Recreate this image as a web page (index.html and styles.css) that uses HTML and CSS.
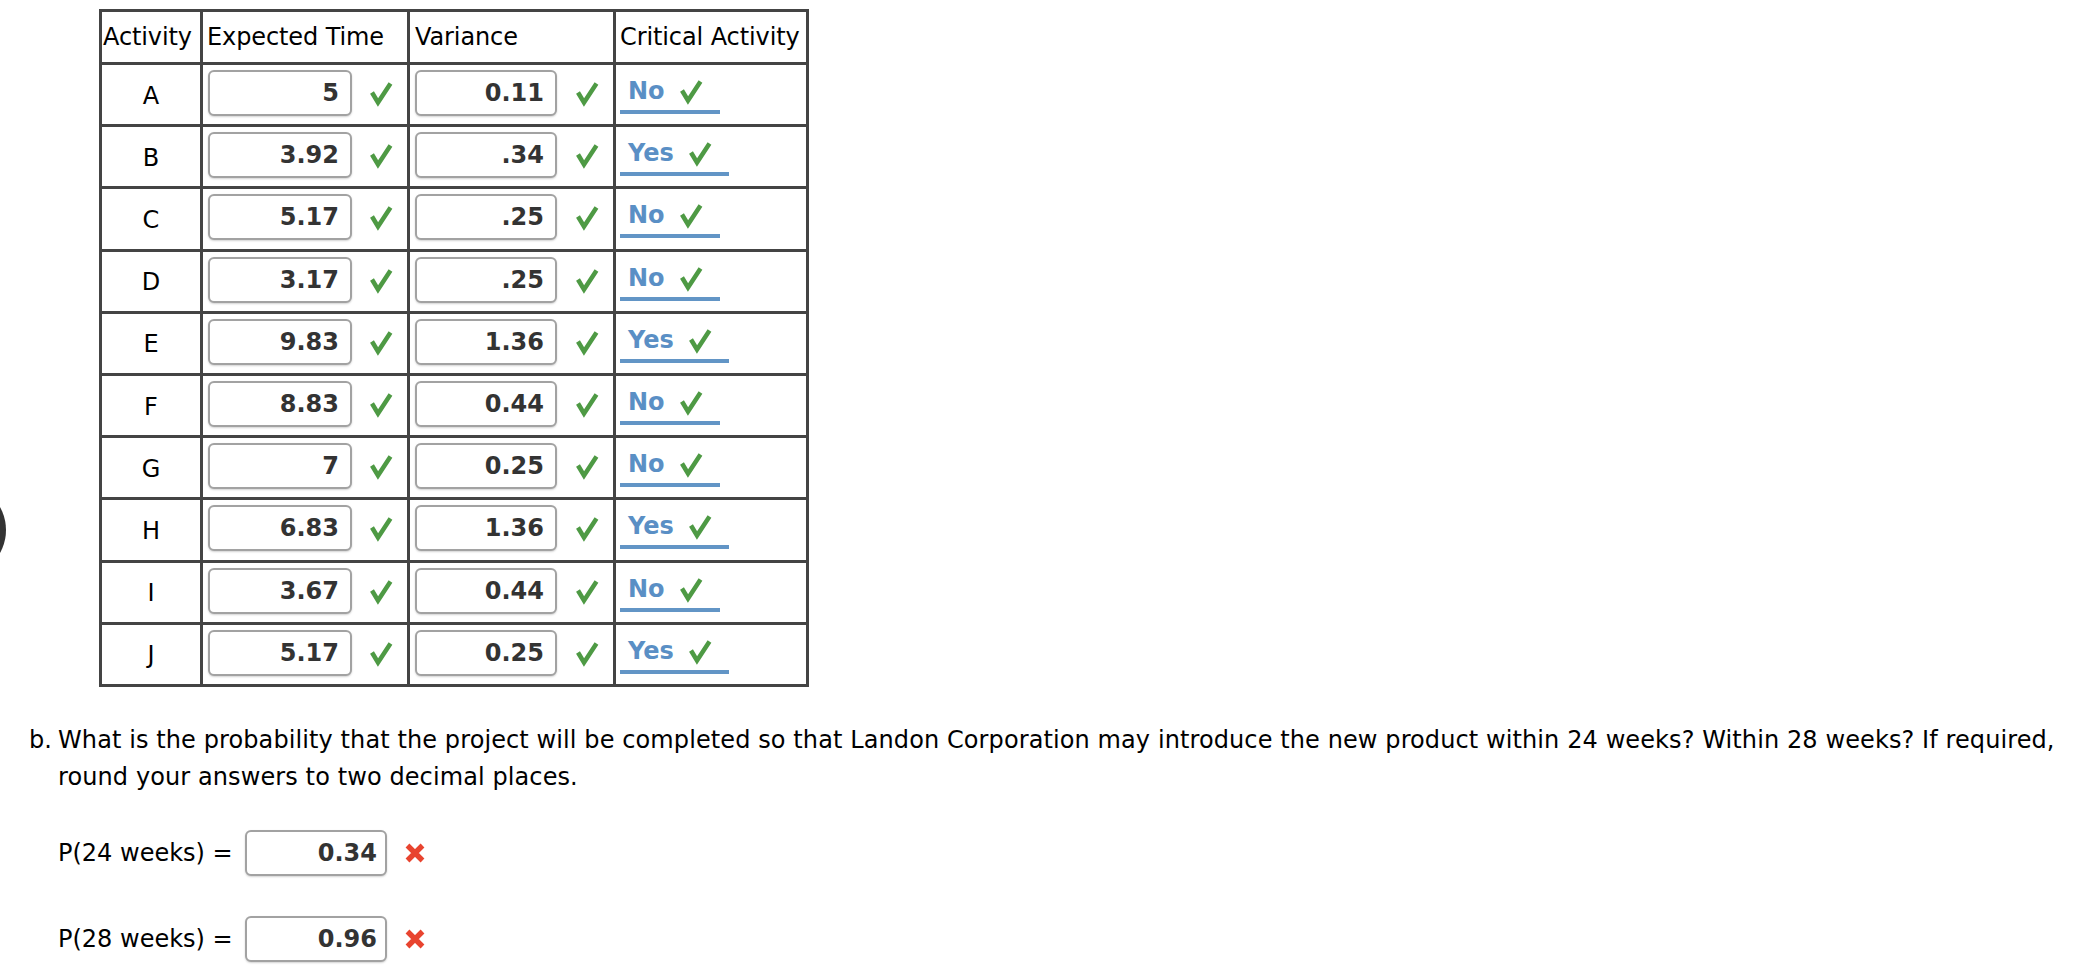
FILE: index.html
```html
<!DOCTYPE html>
<html>
<head>
<meta charset="utf-8">
<link rel="stylesheet" href="styles.css">
</head>
<body>
<div class="side-btn"></div>
<div class="page">
  <table class="grid">
    <colgroup>
      <col class="c1"><col class="c2"><col class="c3"><col class="c4">
    </colgroup>
    <thead>
      <tr class="head">
        <th>Activity</th><th>Expected Time</th><th>Variance</th><th>Critical Activity</th>
      </tr>
    </thead>
    <tbody id="rows"></tbody>
  </table>

  <div class="question">
    <span class="qlabel">b.</span>
    <span class="qtext">What is the probability that the project will be completed so that Landon Corporation may introduce the new product within 24 weeks? Within 28 weeks? If required, round your answers to two decimal places.</span>
  </div>

  <div class="answers">
    <div class="arow">
      <span class="alabel">P(24 weeks) =</span>
      <span class="box abox">0.34</span>
      <svg class="xmark" viewBox="0 0 20 20"><path d="M2.5 2.5 L17.5 17.5 M17.5 2.5 L2.5 17.5"/></svg>
    </div>
    <div class="arow">
      <span class="alabel">P(28 weeks) =</span>
      <span class="box abox">0.96</span>
      <svg class="xmark" viewBox="0 0 20 20"><path d="M2.5 2.5 L17.5 17.5 M17.5 2.5 L2.5 17.5"/></svg>
    </div>
  </div>
</div>
<script src="script.js"></script>
</body>
</html>
```

FILE: script.js
```js
var data = [
  ["A", "5", "0.11", "No"],
  ["B", "3.92", ".34", "Yes"],
  ["C", "5.17", ".25", "No"],
  ["D", "3.17", ".25", "No"],
  ["E", "9.83", "1.36", "Yes"],
  ["F", "8.83", "0.44", "No"],
  ["G", "7", "0.25", "No"],
  ["H", "6.83", "1.36", "Yes"],
  ["I", "3.67", "0.44", "No"],
  ["J", "5.17", "0.25", "Yes"]
];
var check = '<svg class="check" viewBox="0 0 22 24"><path d="M2 11.5 L8 21.5 L20.5 2.5"/></svg>';
var html = "";
data.forEach(function (r) {
  html += '<tr class="row">' +
    '<td class="act">' + r[0] + '</td>' +
    '<td class="val"><div class="cell"><span class="box ibox">' + r[1] + '</span>' + check + '</div></td>' +
    '<td class="val"><div class="cell"><span class="box ibox">' + r[2] + '</span>' + check + '</div></td>' +
    '<td class="crit"><span class="sel"><span class="seltext">' + r[3] + '</span>' + check + '</span></td>' +
    '</tr>';
});
document.getElementById("rows").innerHTML = html;
```

FILE: styles.css
```css
html, body {
  margin: 0;
  padding: 0;
  background: #fff;
}
body {
  font-family: "DejaVu Sans", Verdana, sans-serif;
  font-size: 24px;
  color: #000;
  position: relative;
  overflow: hidden;
  height: 972px;
}
.side-btn {
  position: absolute;
  left: -88px;
  top: 483px;
  width: 94px;
  height: 94px;
  border-radius: 50%;
  background: #333;
}
.page {
  padding-top: 9px;
}
.grid {
  margin-left: 99px;
  border-collapse: separate;
  border-spacing: 0;
  table-layout: fixed;
  width: 710px;
  border-top: 3px solid #444;
  border-left: 3px solid #444;
  box-sizing: border-box;
}
.c1 { width: 101px; }
.c2 { width: 207px; }
.c3 { width: 206px; }
.c4 { width: 193px; }
.grid th, .grid td {
  box-sizing: border-box;
  border-right: 3px solid #444;
  border-bottom: 3px solid #444;
  padding: 0;
}
.grid th {
  height: 53px;
  font-weight: normal;
  text-align: left;
  vertical-align: middle;
  white-space: nowrap;
  padding-left: 1px;
  letter-spacing: -0.1px;
}
.grid th:nth-child(2) { padding-left: 4px; }
.grid th:nth-child(3) { padding-left: 5px; }
.grid th:nth-child(4) { padding-left: 4px; }
.grid td {
  height: 62.2px;
}
.grid td.act {
  text-align: center;
  vertical-align: middle;
  padding-top: 2px;
}
.grid td.val,
.grid td.crit {
  vertical-align: top;
  padding-top: 5px;
}
.cell {
  display: flex;
  align-items: center;
  padding-left: 5px;
  gap: 18px;
}
.val:nth-child(3) .cell { gap: 19px; }
.box {
  box-sizing: border-box;
  display: inline-flex;
  align-items: center;
  justify-content: flex-end;
  height: 46px;
  border: 2px solid #a2a2a2;
  border-radius: 6px;
  box-shadow: 0 1px 2px rgba(0, 0, 0, 0.18);
  background: #fff;
  font-weight: bold;
  color: #333;
  padding-right: 11px;
}
.ibox { width: 144px; }
.val:nth-child(3) .ibox { width: 142px; }
.check {
  width: 22px;
  height: 24px;
  flex: none;
  overflow: visible;
}
.check path {
  fill: none;
  stroke: #4e9a44;
  stroke-width: 4.5;
  stroke-linejoin: miter;
  stroke-linecap: butt;
}
.grid td.crit {
  padding-left: 4px;
}
.sel {
  box-sizing: border-box;
  display: inline-flex;
  align-items: center;
  height: 44px;
  padding: 2px 18px 0 8px;
  gap: 15px;
  border-bottom: 4px solid #6295c6;
}
.seltext {
  font-weight: bold;
  color: #5a8fc5;
}
.question {
  display: flex;
  margin-top: 35px;
  padding-left: 29px;
  padding-right: 20px;
  line-height: 37px;
  letter-spacing: 0.1px;
}
.qlabel {
  flex: none;
  width: 29px;
}
.answers {
  margin-top: 34px;
  padding-left: 58px;
  display: flex;
  flex-direction: column;
  gap: 40px;
}
.arow {
  display: flex;
  align-items: center;
  height: 46px;
}
.alabel {
  width: 187px;
}
.abox {
  width: 142px;
  padding-right: 8px;
}
.xmark {
  width: 20px;
  height: 20px;
  margin-left: 18px;
}
.xmark path {
  fill: none;
  stroke: #e8442f;
  stroke-width: 5.4;
}
```
